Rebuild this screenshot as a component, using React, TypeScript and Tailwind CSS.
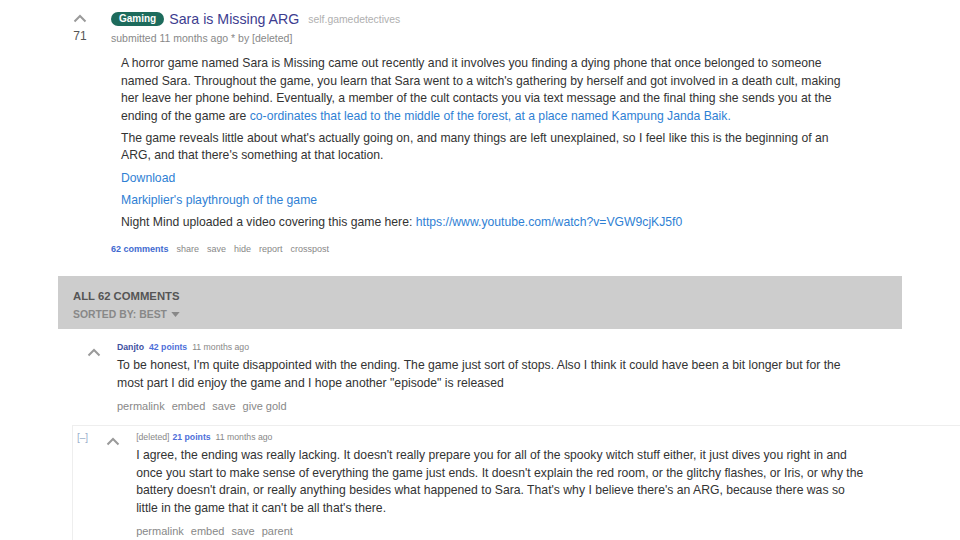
import React from "react";

const Chevron = ({ className = "" }: { className?: string }) => (
  <svg viewBox="0 0 14 9" className={className} fill="none" stroke="#9a9a9a" strokeWidth="2">
    <polyline points="1.5,7.5 7,2 12.5,7.5" />
  </svg>
);

const App = () => {
  const actions1 = ["permalink", "embed", "save", "give gold"];
  const actions2 = ["permalink", "embed", "save", "parent"];

  return (
    <div className="w-[960px] h-[540px] overflow-hidden bg-white font-['Liberation_Sans',Arial,sans-serif] text-[#333]">
      {/* POST */}
      <div className="flex pt-[9px]">
        <div className="w-[32px] ml-[64px] flex flex-col items-center pt-[5px]">
          <Chevron className="w-[14px] h-[9px]" />
          <span className="text-[12px] leading-[14px] mt-[6px] text-[#555]">71</span>
        </div>

        <div className="ml-[15px] flex-1">
          <div className="flex items-center h-[20px]">
            <span className="bg-[#1d6b5c] text-white text-[10px] font-bold leading-[14px] px-[8px] rounded-full">
              Gaming
            </span>
            <span className="ml-[5px] text-[14.2px] leading-[20px] text-[#3d3d8f]">Sara is Missing ARG</span>
            <span className="ml-[9px] text-[10.4px] text-[#b0b0b0] pt-[2px]">self.gamedetectives</span>
          </div>
          <div className="text-[10.5px] leading-[16px] text-[#888] mt-[1px]">
            submitted 11 months ago * by [deleted]
          </div>

          <div className="ml-[10px] mt-[9px] w-[735px] text-[12.2px] leading-[17.6px] flex flex-col gap-[4.5px]">
            <p>
              A horror game named Sara is Missing came out recently and it involves you finding a dying phone that once
              belonged to someone named Sara. Throughout the game, you learn that Sara went to a witch's gathering by
              herself and got involved in a death cult, making her leave her phone behind. Eventually, a member of the
              cult contacts you via text message and the final thing she sends you at the ending of the game are{" "}
              <span className="text-[#2f7fd4]">
                co-ordinates that lead to the middle of the forest, at a place named Kampung Janda Baik.
              </span>
            </p>
            <p>
              The game reveals little about what's actually going on, and many things are left unexplained, so I feel
              like this is the beginning of an ARG, and that there's something at that location.
            </p>
            <p className="text-[#2f7fd4]">Download</p>
            <p className="text-[#2f7fd4]">Markiplier's playthrough of the game</p>
            <p>
              Night Mind uploaded a video covering this game here:{" "}
              <span className="text-[#2f7fd4]">https://www.youtube.com/watch?v=VGW9cjKJ5f0</span>
            </p>
          </div>

          <div className="flex gap-[8px] mt-[11px] text-[9px] leading-[14px] text-[#888]">
            <span className="font-bold text-[#3f6ad0]">62 comments</span>
            <span>share</span>
            <span>save</span>
            <span>hide</span>
            <span>report</span>
            <span>crosspost</span>
          </div>
        </div>
      </div>

      {/* COMMENTS HEADER */}
      <div className="ml-[58px] w-[844px] h-[53px] mt-[20px] bg-[#cdcdcd] pl-[15px] pt-[13px]">
        <div className="text-[11.3px] font-bold leading-[14px] text-[#555]">ALL 62 COMMENTS</div>
        <div className="flex items-center gap-[4px] mt-[5px] text-[10.4px] font-bold leading-[13px] text-[#888]">
          SORTED BY: BEST
          <svg viewBox="0 0 10 6" className="w-[9px] h-[5px]" fill="#888">
            <polygon points="0,0 10,0 5,6" />
          </svg>
        </div>
      </div>

      {/* COMMENT 1 */}
      <div className="flex mt-[12px]">
        <div className="ml-[87px] w-[14px] pt-[7px]">
          <Chevron className="w-[14px] h-[9px]" />
        </div>
        <div className="ml-[16px] w-[730px]">
          <div className="flex gap-[5px] text-[8.7px] leading-[13px]">
            <span className="font-bold text-[#3d4f9f]">Danjto</span>
            <span className="font-bold text-[#4e6fd9]">42 points</span>
            <span className="text-[#888]">11 months ago</span>
          </div>
          <p className="text-[12.2px] leading-[17.5px] mt-[3px]">
            To be honest, I'm quite disappointed with the ending. The game just sort of stops. Also I think it could have
            been a bit longer but for the most part I did enjoy the game and I hope another "episode" is released
          </p>
          <div className="flex gap-[7px] mt-[7px] text-[11px] leading-[14px] text-[#888]">
            {actions1.map((a) => (
              <span key={a}>{a}</span>
            ))}
          </div>
        </div>
      </div>

      {/* COMMENT 2 */}
      <div className="ml-[72px] mt-[12px] border-l border-t border-[#eeeeee] flex pt-[5px] h-[200px]">
        <span className="ml-[4px] text-[10px] leading-[13px] text-[#9ab0cc]">[–]</span>
        <div className="ml-[18px] w-[14px] pt-[6px]">
          <Chevron className="w-[14px] h-[9px]" />
        </div>
        <div className="ml-[16px] w-[730px]">
          <div className="flex gap-[3px] text-[8.7px] leading-[13px]">
            <span className="text-[#888]">[deleted]</span>
            <span className="font-bold text-[#4e6fd9]">21 points</span>
            <span className="text-[#888] ml-[2px]">11 months ago</span>
          </div>
          <p className="text-[12.2px] leading-[17.5px] mt-[3px]">
            I agree, the ending was really lacking. It doesn't really prepare you for all of the spooky witch stuff
            either, it just dives you right in and once you start to make sense of everything the game just ends. It
            doesn't explain the red room, or the glitchy flashes, or Iris, or why the battery doesn't drain, or really
            anything besides what happened to Sara. That's why I believe there's an ARG, because there was so little in
            the game that it can't be all that's there.
          </p>
          <div className="flex gap-[7px] mt-[7px] text-[11px] leading-[14px] text-[#888]">
            {actions2.map((a) => (
              <span key={a}>{a}</span>
            ))}
          </div>
        </div>
      </div>
    </div>
  );
};

export default App;
